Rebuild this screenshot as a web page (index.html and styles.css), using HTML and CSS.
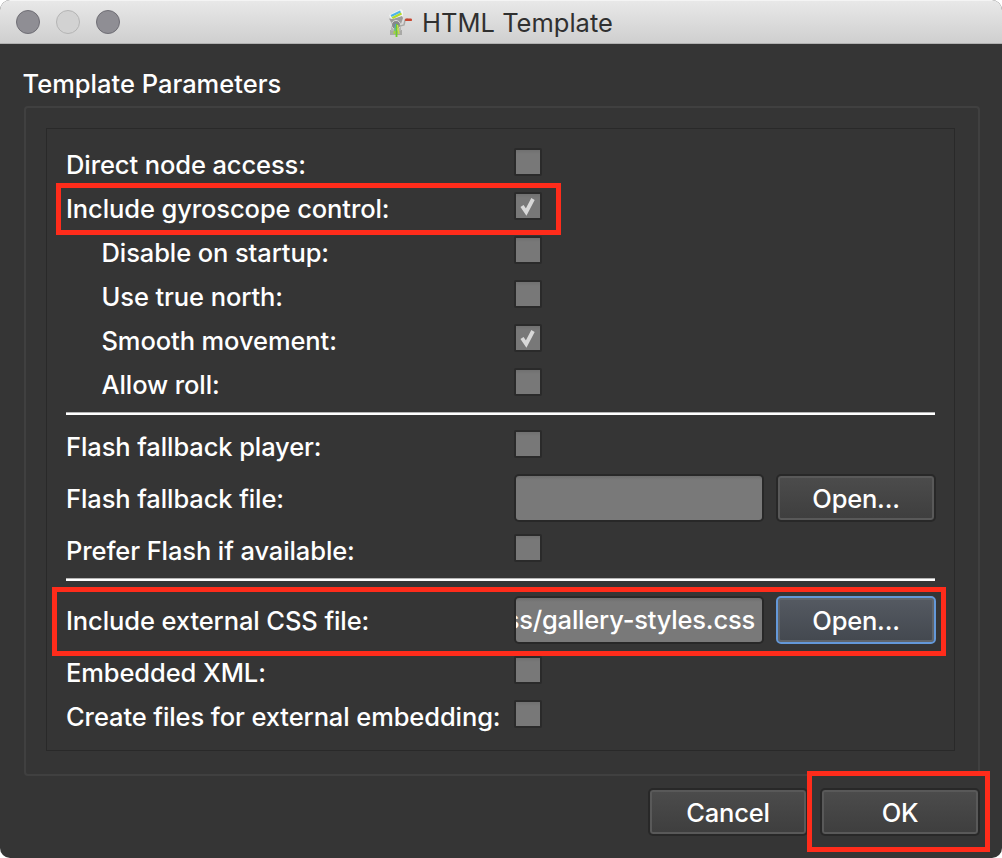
FILE: index.html
```html
<!DOCTYPE html>
<html lang="en">
<head>
<meta charset="utf-8">
<title>HTML Template</title>
<link rel="stylesheet" href="styles.css">
</head>
<body>
<div class="window">
  <header class="titlebar">
    <div class="lights"><span class="light"></span><span class="light light-off"></span><span class="light"></span></div>
    <div class="title">
      <svg class="app-icon" width="26" height="32" viewBox="0 0 26 32">
        <path d="M0 8 12 2l2 2v5l-3 3H2z" fill="#f4f5f3"/>
        <path d="M1.500 8 11 3.500l1 2L2.500 10z" fill="#4fb4e8"/>
        <path d="m2.500 10.200 9.500-4.600 1 2L4 12z" fill="#b4dc28"/>
        <path d="M0 11.500 4 12l9-3 1 2-2 6H3z" fill="#9d9d9b"/>
        <path d="M1 23h12v5H1z" fill="#a9a9a6"/>
        <path d="M2 16h10v8H2z" fill="#b5b5b2"/>
        <circle cx="7" cy="18" r="4.500" fill="#85888a" stroke="#dcdcda"/>
        <path d="m11 19 4-1 1-5 3-1" fill="none" stroke="#a9a9a6" stroke-width="1.500"/>
        <rect x="16" y="11.500" width="7" height="2.600" rx="1.200" fill="#c8452f"/>
        <path d="M7 18 5 27" fill="none" stroke="#a5d93a" stroke-width="1.600"/>
        <path d="M7.500 17v13" fill="none" stroke="#6fce24" stroke-width="1.800"/>
        <path d="m8.500 18 1.500 9" fill="none" stroke="#c9e04c" stroke-width="1.400"/>
        <path d="m6.500 17-.5 7" fill="none" stroke="#4aa7c6"/>
      </svg>
      <span>HTML Template</span>
    </div>
  </header>
  <main class="content">
    <h1 class="heading">Template Parameters</h1>
    <section class="group">
      <div class="panel">
        <div class="row"><span class="label">Direct node access:</span><span class="check"></span></div>
        <div class="row"><span class="label">Include gyroscope control:</span><span class="check"><svg class="tick" width="24" height="24" viewBox="0 0 24 24"><path d="m6 12 4.200 6L17 5"/></svg></span><i class="mark mark-gyro"></i></div>
        <div class="row"><span class="label sub">Disable on startup:</span><span class="check"></span></div>
        <div class="row"><span class="label sub">Use true north:</span><span class="check"></span></div>
        <div class="row"><span class="label sub">Smooth movement:</span><span class="check"><svg class="tick" width="24" height="24" viewBox="0 0 24 24"><path d="m6 12 4.200 6L17 5"/></svg></span></div>
        <div class="row"><span class="label sub">Allow roll:</span><span class="check"></span></div>
        <div class="rule"></div>
        <div class="row"><span class="label">Flash fallback player:</span><span class="check"></span></div>
        <div class="row row-file"><span class="label">Flash fallback file:</span><span class="field"></span><button class="button">Open...</button></div>
        <div class="row"><span class="label">Prefer Flash if available:</span><span class="check"></span></div>
        <div class="rule"></div>
        <div class="row row-file"><span class="label">Include external CSS file:</span><span class="field"><span class="value">ss/gallery-styles.css</span></span><button class="button focused">Open...</button><i class="mark mark-css"></i></div>
        <div class="row"><span class="label">Embedded XML:</span><span class="check"></span></div>
        <div class="row"><span class="label">Create files for external embedding:</span><span class="check"></span></div>
      </div>
    </section>
    <footer class="actions"><button class="button">Cancel</button><div class="row"><button class="button">OK</button><i class="mark mark-ok"></i></div></footer>
  </main>
</div>
</body>
</html>
```
FILE: styles.css
```css
* { box-sizing: border-box; }
body { margin: 0; background: #fff; font: 500 25.5px/30px Inter, "Liberation Sans", sans-serif; color: #fff; }
.window { width: 1002px; height: 858px; border-radius: 10px; overflow: hidden; background: #353535; }
.titlebar { position: relative; height: 44px; display: flex; align-items: center; justify-content: center; background: linear-gradient(#e8e8e8, #cfcfcf); border-top: 1px solid #f4f4f4; border-bottom: 1px solid #b1b1b1; }
.lights { position: absolute; left: 16px; top: 9px; display: flex; gap: 16px; }
.light { width: 24px; height: 24px; border-radius: 50%; background: #8f8e94; border: 1px solid #6f6e75; }
.light-off { background: #d2d2d2; border-color: #b4b4b4; }
.title { display: flex; align-items: center; gap: 7px; padding-top: 2px; color: #303030; font-weight: 400; }
.content { padding: 25px 22px 0 24px; }
.heading { margin: 0 0 7px -1.5px; font: inherit; letter-spacing: 0; }
.group { width: 956px; height: 670px; padding: 20px; border: 2px solid #404040; border-radius: 4px; }
.panel { width: 909px; height: 623px; padding: 19px 18px 0 19px; border: 1px solid #292929; display: flex; flex-direction: column; gap: 16px; }
.row { position: relative; display: flex; align-items: center; height: 28px; flex: none; }
.row-file { height: 48px; margin-bottom: -4px; }
.label { width: 448px; padding-top: 5px; white-space: nowrap; letter-spacing: -.1px; }
.row-file .label { padding-top: 1px; }
.sub { padding-left: 35.5px; }
.check { width: 28px; height: 28px; flex: none; border: 2px solid #2a2a2a; border-radius: 2px; background: linear-gradient(#707070, #787878 4px); }
.tick { display: block; }
.tick path { fill: none; stroke: #d8d8d8; stroke-width: 3.8; }
.rule { flex: none; height: 3px; margin-bottom: -1px; margin-right: 1px; background: #fff; border-top: 1px solid #b5b5b5; }
.field { width: 250px; height: 48px; margin-right: 12px; flex: none; display: flex; justify-content: flex-end; align-items: center; overflow: hidden; white-space: nowrap; border: 2px solid #282828; border-radius: 5px; background: linear-gradient(#6d6d6d, #797979 4px); }
.value { padding-right: 7px; letter-spacing: -.2px; }
.button { width: 160px; height: 48px; flex: none; padding: 2px 0 0; font: inherit; letter-spacing: -.2px; color: #fff; border: 2px solid #282828; border-radius: 5px; background: linear-gradient(#4c4c4c, #3e3e3e); box-shadow: inset 0 0 0 2px #595959; }
.focused { border-color: #6498d8; background: linear-gradient(#555a62, #43484f); box-shadow: inset 0 0 0 2px #60656b; }
.actions { display: flex; justify-content: flex-end; gap: 12px; margin-top: 12px; }
.actions .row { height: 48px; }
.mark { position: absolute; border: 5px solid #ff2c1b; pointer-events: none; }
.mark-gyro { left: -10px; top: -9px; width: 505px; height: 52px; }
.mark-css { left: -14px; top: -9px; width: 894px; height: 69px; }
.mark-ok { left: -13px; top: -17px; width: 183px; height: 81px; }
```
